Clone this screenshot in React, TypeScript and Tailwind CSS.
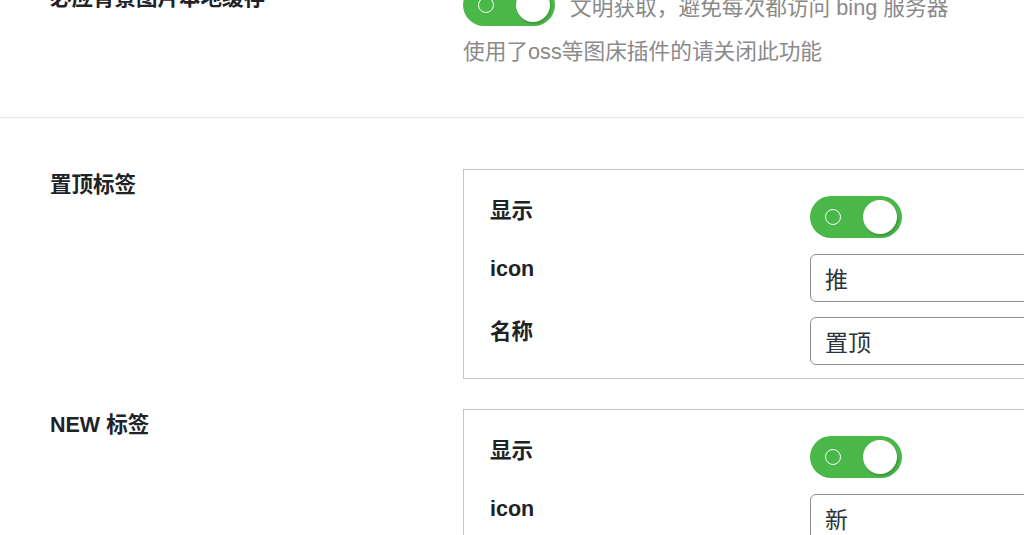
const font = "font-['Liberation_Sans','Noto_Sans_CJK_SC',sans-serif]";

const Toggle = () => (
  <div className="relative h-[42px] w-[92px] shrink-0 rounded-full bg-[#4ab749]">
    <span className="absolute left-[15px] top-[13px] h-[16px] w-[16px] rounded-full border-[1.5px] border-white" />
    <span className="absolute right-[5px] top-[4px] h-[34px] w-[34px] rounded-full bg-white shadow-[1px_2px_2px_rgba(0,0,0,0.18)]" />
  </div>
);

const TextField = ({ value }: { value: string }) => (
  <input
    readOnly
    defaultValue={value}
    className="h-[48px] w-[320px] rounded-[6px] border border-[#8c8f94] bg-white px-[14px] text-[23px] text-[#2c3338] outline-none"
  />
);

const SubRow = ({ label, children }: { label: string; children: React.ReactNode }) => (
  <div className="flex items-start">
    <div className="w-[320px] shrink-0 pt-[1px] text-[21.5px] font-bold leading-[28px] text-[#1d2327]">{label}</div>
    {children}
  </div>
);

const TagGroup = ({ title, icon, name }: { title: string; icon: string; name?: string }) => (
  <div className="flex items-start">
    <div className="w-[463px] shrink-0 pl-[50px] pt-[2px] text-[21.5px] font-bold leading-[28px] text-[#1d2327]">{title}</div>
    <div className="w-[640px] shrink-0 border border-[#c3c4c7] pb-[13px] pl-[26px] pt-[26px]">
      <div className="flex flex-col gap-[15.5px]">
        <SubRow label="显示">
          <Toggle />
        </SubRow>
        <SubRow label="icon">
          <TextField value={icon} />
        </SubRow>
        {name && (
          <SubRow label="名称">
            <TextField value={name} />
          </SubRow>
        )}
      </div>
    </div>
  </div>
);

export default function App() {
  return (
    <div className={`h-[535px] w-[1024px] overflow-hidden bg-white ${font}`}>
      {/* bing background cache */}
      <section className="-mt-[16px] flex items-start pb-[51px]">
        <div className="w-[463px] shrink-0 pl-[50px] text-[21.5px] font-bold leading-[28px] text-[#1d2327]">必应背景图片本地缓存</div>
        <div>
          <div className="flex items-center gap-[15px]">
            <Toggle />
            <span className="whitespace-nowrap pt-[6px] text-[21.7px] leading-[28px] text-[#8a8a8a]">文明获取，避免每次都访问 bing 服务器</span>
          </div>
          <p className="mt-[12px] whitespace-nowrap text-[21.7px] leading-[28px] text-[#8a8a8a]">使用了oss等图床插件的请关闭此功能</p>
        </div>
      </section>
      <div className="h-px bg-[#e8e8e8]" />
      <section className="flex flex-col gap-[30px] pt-[51px]">
        <TagGroup title="置顶标签" icon="推" name="置顶" />
        <TagGroup title="NEW 标签" icon="新" name="最新" />
      </section>
    </div>
  );
}
